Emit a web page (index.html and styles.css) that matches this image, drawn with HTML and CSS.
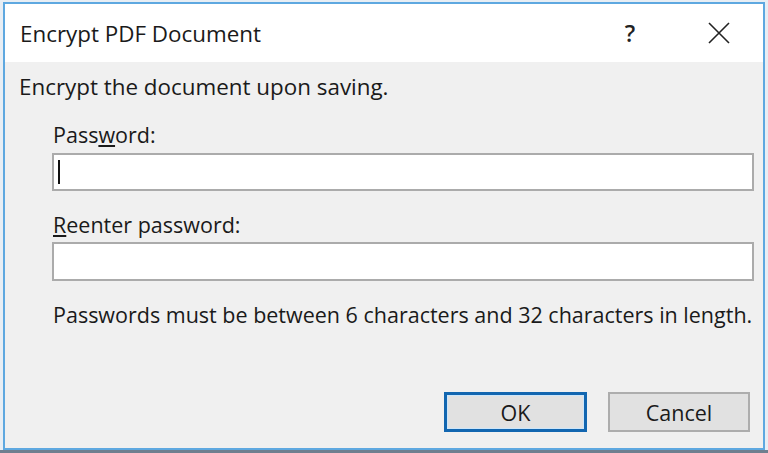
FILE: index.html
```html
<!DOCTYPE html>
<html>
<head>
<meta charset="utf-8">
<link rel="stylesheet" href="styles.css">
</head>
<body>
<div class="screen">
  <div class="dialog">
    <div class="titlebar">
      <span class="title">Encrypt PDF Document</span>
      <div class="tb-buttons">
        <span class="help">?</span>
        <span class="close">
          <svg width="22" height="22" viewBox="0 0 22 22"><path d="M1 1 L21 21 M21 1 L1 21" stroke="#222" stroke-width="1.6" fill="none"/></svg>
        </span>
      </div>
    </div>
    <div class="body">
      <p class="intro">Encrypt the document upon saving.</p>
      <div class="fields">
        <label class="label">Pass<u>w</u>ord:</label>
        <div class="input first"><span class="caret"></span></div>
        <label class="label second"><u>R</u>eenter password:</label>
        <div class="input second"></div>
        <p class="note">Passwords must be between 6 characters and 32 characters in length.</p>
      </div>
      <div class="actions">
        <button class="btn default">OK</button>
        <button class="btn">Cancel</button>
      </div>
    </div>
  </div>
</div>
</body>
</html>
```
FILE: styles.css
```css
html, body {
  margin: 0;
  padding: 0;
}
body {
  width: 768px;
  height: 453px;
  overflow: hidden;
  background: #6f7f8f;
  font-family: "Open Sans", "Noto Sans", sans-serif;
  color: #1a1a1a;
}
.screen {
  width: 768px;
  height: 450px;
  background: #e8eef4;
  padding: 2px 0 0 3px;
  box-sizing: border-box;
}
.dialog {
  width: 762px;
  height: 448px;
  box-sizing: border-box;
  border: 2px solid #5ea8e0;
  background: #f0f0f0;
  display: flex;
  flex-direction: column;
}
.titlebar {
  height: 58px;
  background: #ffffff;
  display: flex;
  align-items: center;
  justify-content: space-between;
  padding-left: 15px;
  flex-shrink: 0;
}
.title {
  font-size: 22.4px;
  color: #1a1a1a;
}
.tb-buttons {
  display: flex;
  align-items: center;
}
.help {
  font-size: 23px;
  font-weight: 600;
  color: #222;
  width: 40px;
  text-align: center;
  margin-right: 58px;
}
.close {
  display: flex;
  width: 22px;
  height: 22px;
  margin-right: 33px;
}
.body {
  flex: 1;
  display: flex;
  flex-direction: column;
  padding: 0 0 0 14px;
}
.intro {
  margin: 12px 0 0 0;
  font-size: 22.4px;
  line-height: 26px;
}
.fields {
  padding-left: 33px;
  padding-right: 9px;
  display: flex;
  flex-direction: column;
}
.label {
  font-size: 21.5px;
  line-height: 26px;
  margin-top: 22px;
  padding-left: 1px;
}
.label.second {
  margin-top: 21px;
}
.input {
  height: 38px;
  box-sizing: border-box;
  border: 2px solid #ababab;
  background: #fff;
  margin-top: 5px;
  display: flex;
  align-items: center;
  padding-left: 4px;
}
.input.second {
  margin-top: 4px;
  height: 39px;
}
.caret {
  width: 2px;
  height: 24px;
  background: #111;
}
.note {
  margin: 21px 0 0 0;
  padding-left: 1px;
  font-size: 21.5px;
  line-height: 26px;
}
.actions {
  display: flex;
  justify-content: flex-end;
  gap: 21px;
  padding-right: 13px;
  margin-top: auto;
  margin-bottom: 16px;
}
.btn {
  width: 142px;
  height: 40px;
  box-sizing: border-box;
  border: 2px solid #adadad;
  background: #e1e1e1;
  font-family: "Open Sans", "Noto Sans", sans-serif;
  font-size: 21.5px;
  color: #1a1a1a;
  padding: 0;
}
.btn.default {
  width: 143px;
  border: 3px solid #1266b0;
  box-shadow: inset 0 0 0 1px #cce6fb;
}
```
